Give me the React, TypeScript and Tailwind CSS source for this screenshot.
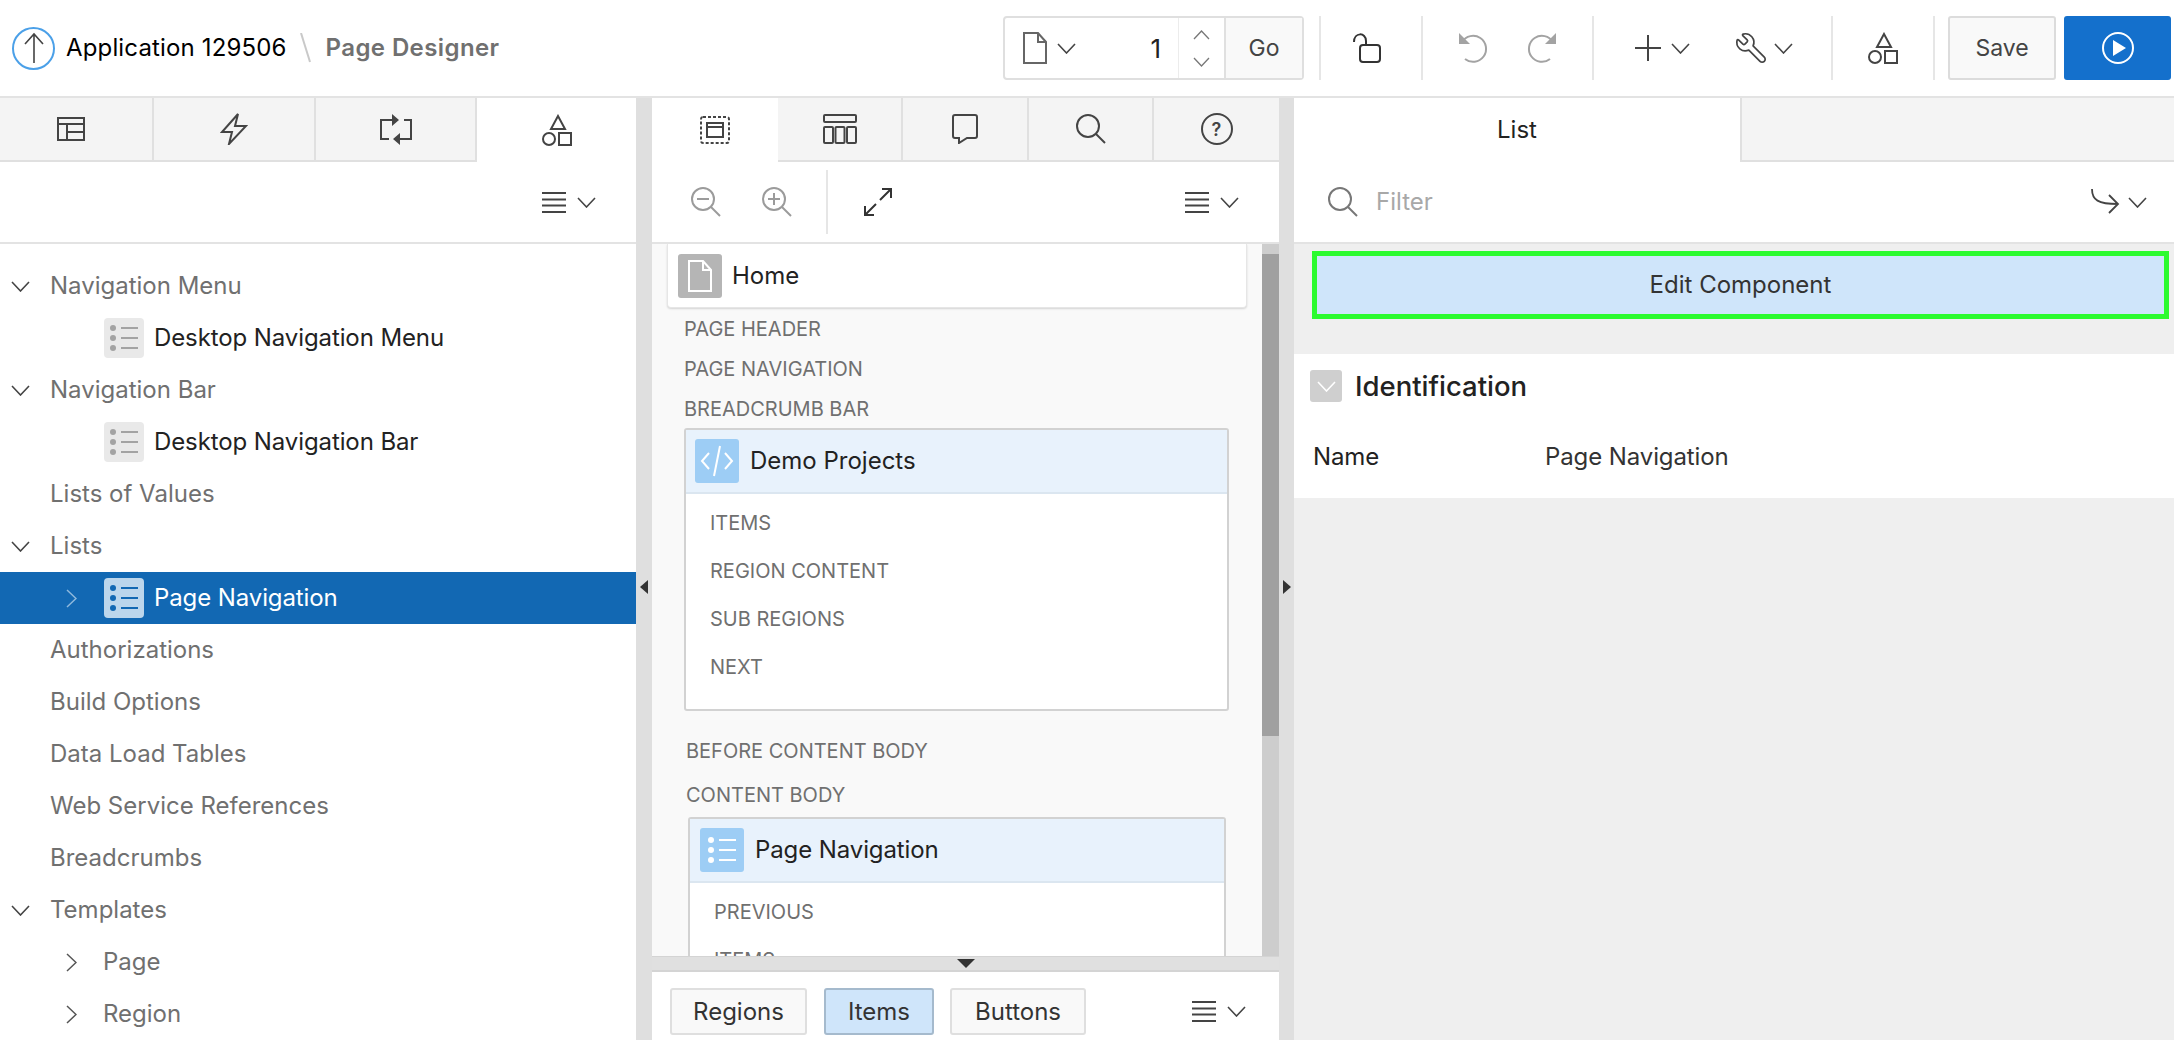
import React from "react";
import { Wrench } from "lucide-react";

type P = { className?: string };
const S = ({ w, h, children, className = "", color = "#444", sw = 2 }: { w: number; h: number; children: React.ReactNode; className?: string; color?: string; sw?: number }) => (
  <svg width={w} height={h} viewBox={`0 0 ${w} ${h}`} fill="none" stroke={color} strokeWidth={sw} className={`shrink-0 ${className}`}>{children}</svg>
);
const ChevD = ({ className = "", color = "#444", w = 19 }: P & { color?: string; w?: number }) => (
  <S w={w} h={11} color={color} sw={1.6} className={className}><path d={`M1 1 L${w / 2} 10 L${w - 1} 1`} /></S>
);
const ChevU = ({ className = "", color = "#777" }: P & { color?: string }) => (
  <S w={17} h={10} color={color} sw={1.3} className={className}><path d="M1 9 L8.5 1 L16 9" /></S>
);
const ChevR = ({ className = "", color = "#555" }: P & { color?: string }) => (
  <S w={11} h={19} color={color} sw={1.5} className={className}><path d="M1 1 L10 9.5 L1 18" /></S>
);
const Burger = () => (
  <S w={24} h={21} color="#444" sw={2}><path d="M0 1H24M0 7.5H24M0 13.5H24M0 20H24" /></S>
);
const Menu = ({ className = "" }: P) => (
  <div className={`flex items-center gap-[11px] ${className}`}><Burger /><ChevD /></div>
);
const Shapes = () => (
  <S w={30} h={32} color="#444" sw={2}>
    <path d="M16 2 L9 15 H23 Z" /><circle cx="7" cy="25" r="6" /><rect x="17" y="19" width="12" height="12" />
  </S>
);
const Search = ({ color = "#444", w = 30, h = 30, inner }: { color?: string; w?: number; h?: number; inner?: React.ReactNode }) => (
  <S w={w} h={h} color={color} sw={2}>
    <circle cx="12" cy="12" r="11" /><path d="M20 20 L29 29" />{inner}
  </S>
);
const ListGlyph = ({ color }: { color: string }) => (
  <svg width="30" height="28" viewBox="0 0 30 28" className="shrink-0">
    <circle cx="4" cy="4" r="3" fill={color} /><circle cx="4" cy="14" r="3" fill={color} /><circle cx="4" cy="24" r="3" fill={color} />
    <path d="M12 4H29M12 14H29M12 24H29" stroke={color} strokeWidth="2" />
  </svg>
);
const Badge = ({ bg, color }: { bg: string; color: string }) => (
  <div className={`w-[40px] h-[40px] rounded-[4px] flex items-center justify-center shrink-0 ${bg}`}><ListGlyph color={color} /></div>
);

const Tab = ({ w, active, last, children }: { w: string; active?: boolean; last?: boolean; children?: React.ReactNode }) => (
  <div className={`${w} h-full flex items-center justify-center ${active ? "bg-white" : `bg-[#f4f4f4] border-b-2 border-[#e0e0e0] ${last ? "" : "border-r-2"}`}`}>{children}</div>
);

const Sep = () => <div className="w-[2px] h-[64px] bg-[#e6e6e6] shrink-0" />;

const TreeRow = ({ children, selected }: { children: React.ReactNode; selected?: boolean }) => (
  <div className={`h-[52px] flex items-center ${selected ? "bg-[#1268b3] text-white" : ""}`}>{children}</div>
);
const Top = ({ label, open }: { label: string; open?: boolean }) => (
  <TreeRow>
    <div className="w-[50px] pl-[11px] shrink-0">{open && <ChevD />}</div>
    <span className="text-[#707070]">{label}</span>
  </TreeRow>
);
const Child = ({ label }: { label: string }) => (
  <TreeRow>
    <div className="w-[104px] shrink-0" />
    <Badge bg="bg-[#e9e9e9]" color="#a3a3a3" />
    <span className="ml-[10px] text-[#222] tracking-[-0.1px]">{label}</span>
  </TreeRow>
);
const Sub = ({ label }: { label: string }) => (
  <TreeRow>
    <div className="w-[103px] pl-[66px] shrink-0"><ChevR /></div>
    <span className="text-[#707070]">{label}</span>
  </TreeRow>
);
const Label = ({ children, h = "h-[40px]", className = "" }: { children: React.ReactNode; h?: string; className?: string }) => (
  <div className={`${h} flex items-center text-[20px] text-[#707070] uppercase ${className}`}>{children}</div>
);
const PBtn = ({ children, w, active }: { children: string; w: string; active?: boolean }) => (
  <div className={`${w} h-[47px] rounded-[3px] border-2 flex items-center justify-center text-[#333] ${active ? "bg-[#cfe5fa] border-[#a5bacd]" : "bg-[#f9f9f9] border-[#dfdfdf]"}`}>{children}</div>
);

export default function App() {
  return (
    <div className="w-[2174px] h-[1040px] overflow-hidden bg-white flex flex-col text-[24px] font-['Inter','Liberation_Sans',sans-serif] text-[#222]">
      {/* header */}
      <header className="h-[98px] shrink-0 border-b-2 border-[#e3e3e3] flex items-center">
        <div className="ml-[12px] w-[43px] h-[43px] rounded-full border-2 border-[#4ba0e8] flex items-center justify-center shrink-0">
          <S w={20} h={32} color="#444" sw={1.6}><path d="M10 31V2M1 12 L10 2 L19 12" /></S>
        </div>
        <span className="ml-[11px] text-black tracking-[0.15px]">Application 129506</span>
        <S w={12} h={30} color="#c9c9c9" sw={2} className="ml-[13px]"><path d="M1 0 L10 29" /></S>
        <span className="ml-[14px] font-semibold text-[#707070] tracking-[0.4px]">Page Designer</span>
        <div className="flex-1" />
        <div className="w-[301px] h-[64px] rounded-[4px] border-2 border-[#dfdfdf] flex items-stretch shrink-0">
          <div className="flex-1 flex items-center pl-[18px]">
            <S w={24} h={32} color="#666" sw={2}><path d="M1 1H15L23 10V31H1Z M15 1V10H23" /></S>
            <ChevD className="ml-[10px]" />
            <span className="ml-auto mr-[17px] text-[26px] text-[#222]">1</span>
          </div>
          <div className="w-[48px] border-l border-[#ececec] border-r-2 border-r-[#e0e0e0] flex flex-col items-center justify-center gap-[17px]">
            <ChevU /><ChevU className="rotate-180" />
          </div>
          <div className="w-[76px] bg-[#f9f9f9] flex items-center justify-center text-[#444] text-[23px]">Go</div>
        </div>
        <div className="w-[15px] shrink-0" />
        <Sep />
        <div className="w-[100px] flex justify-center pr-[8px] shrink-0">
          <S w={28} h={30} color="#333" sw={2}>
            <rect x="7" y="12" width="20" height="17" rx="3" /><path d="M1 9 C1 -1 13 -1 13 8 V12" />
          </S>
        </div>
        <Sep />
        <div className="w-[169px] flex justify-center gap-[39px] pr-[1px] shrink-0">
          <S w={30} h={32} color="#a3a3a3" sw={2}>
            <path d="M4 10 A13 13 0 1 1 7 27 A13 13 0 0 0 7 27" /><path d="M1 1 L1 12 L12 12 Z" fill="#a3a3a3" stroke="none" />
          </S>
          <S w={30} h={32} color="#a3a3a3" sw={2} className="-scale-x-100">
            <path d="M4 10 A13 13 0 1 1 7 27 A13 13 0 0 0 7 27" /><path d="M1 1 L1 12 L12 12 Z" fill="#a3a3a3" stroke="none" />
          </S>
        </div>
        <Sep />
        <div className="w-[237px] flex items-center shrink-0">
          <S w={26} h={26} color="#444" sw={2} className="ml-[41px]"><path d="M13 0V26M0 13H26" /></S>
          <ChevD className="ml-[10px]" />
          <Wrench size={34} strokeWidth={1.2} color="#444" className="ml-[44px] -scale-x-100 shrink-0" />
          <ChevD className="ml-[6px]" />
        </div>
        <Sep />
        <div className="w-[100px] flex justify-center shrink-0"><Shapes /></div>
        <Sep />
        <div className="ml-[13px] w-[108px] h-[64px] rounded-[3px] border-2 border-[#dcdcdc] bg-[#f9f9f9] flex items-center justify-center text-[#444] text-[23px] shrink-0">Save</div>
        <div className="ml-[8px] w-[107px] h-[64px] rounded-[3px] bg-[#1470cc] flex items-center justify-center shrink-0">
          <svg width="32" height="32" viewBox="0 0 32 32" fill="none"><circle cx="16" cy="16" r="15" stroke="#fff" strokeWidth="2" /><path d="M11 8 L24 16 L11 24 Z" fill="#fff" /></svg>
        </div>
        <div className="w-[3px] shrink-0" />
      </header>

      <main className="flex-1 flex min-h-0">
        {/* left */}
        <section className="w-[636px] shrink-0 flex flex-col">
          <div className="h-[64px] flex shrink-0">
            <Tab w="w-[154px] pr-[11px]">
              <S w={28} h={24} color="#444" sw={2}><rect x="1" y="1" width="26" height="22" /><path d="M1 7H27M10 7V23M10 15H27" /></S>
            </Tab>
            <Tab w="w-[162px]">
              <S w={28} h={32} color="#444" sw={2}><path d="M18 1 L2 19 H12 L9 31 L26 13 H15 Z" /></S>
            </Tab>
            <Tab w="w-[161px]">
              <S w={34} h={32} color="#444" sw={2}>
                <path d="M13 7H2V26H10M21 26H32V7H25" /><path d="M13 1 L20 7 L13 13 Z M21 20 L14 26 L21 32 Z" fill="#444" stroke="none" />
              </S>
            </Tab>
            <Tab w="flex-1" active><Shapes /></Tab>
          </div>
          <div className="h-[82px] shrink-0 border-b-2 border-[#e3e3e3] flex items-center justify-end pr-[40px]"><Menu /></div>
          <div className="pt-[16px] flex-1 overflow-hidden">
            <Top label="Navigation Menu" open />
            <Child label="Desktop Navigation Menu" />
            <Top label="Navigation Bar" open />
            <Child label="Desktop Navigation Bar" />
            <Top label="Lists of Values" />
            <Top label="Lists" open />
            <TreeRow selected>
              <div className="w-[104px] pl-[66px] shrink-0"><ChevR color="#8fb9dd" /></div>
              <Badge bg="bg-[#bcd6ec]" color="#1268b3" />
              <span className="ml-[10px] tracking-[-0.1px]">Page Navigation</span>
            </TreeRow>
            <Top label="Authorizations" />
            <Top label="Build Options" />
            <Top label="Data Load Tables" />
            <Top label="Web Service References" />
            <Top label="Breadcrumbs" />
            <Top label="Templates" open />
            <Sub label="Page" />
            <Sub label="Region" />
          </div>
        </section>

        {/* splitter */}
        <div className="w-[16px] shrink-0 bg-[#dfdfdf] flex items-center justify-center pt-[36px]">
          <svg width="8" height="14" viewBox="0 0 8 14"><path d="M8 0V14L0 7Z" fill="#333" /></svg>
        </div>

        {/* center */}
        <section className="w-[627px] shrink-0 flex flex-col">
          <div className="h-[64px] flex shrink-0">
            <Tab w="w-[126px]" active>
              <S w={30} h={28} color="#444" sw={2}>
                <rect x="1" y="1" width="28" height="26" rx="2" strokeDasharray="3 2" /><rect x="7" y="7" width="16" height="14" /><path d="M7 11H23" />
              </S>
            </Tab>
            <Tab w="w-[125px]">
              <S w={34} h={30} color="#444" sw={2}>
                <rect x="1" y="1" width="32" height="7" rx="1" /><rect x="1" y="13" width="9" height="16" rx="1" /><rect x="12.5" y="13" width="9" height="16" rx="1" /><rect x="24" y="13" width="9" height="16" rx="1" />
              </S>
            </Tab>
            <Tab w="w-[126px]">
              <S w={26} h={30} color="#444" sw={2}><path d="M3 1H23Q25 1 25 3V22Q25 24 23 24H15L7 29V24H3Q1 24 1 22V3Q1 1 3 1Z" /></S>
            </Tab>
            <Tab w="w-[125px]"><Search /></Tab>
            <Tab w="flex-1" last>
              <div className="w-[32px] h-[32px] rounded-full border-2 border-[#444] flex items-center justify-center text-[18px] font-semibold text-[#444]">?</div>
            </Tab>
          </div>
          <div className="h-[82px] shrink-0 border-b-2 border-[#e3e3e3] flex items-center">
            <div className="ml-[39px]"><Search color="#9b9b9b" inner={<path d="M6 12H18" />} /></div>
            <div className="ml-[41px]"><Search color="#9b9b9b" inner={<path d="M6 12H18M12 6V18" />} /></div>
            <div className="ml-[34px] w-[2px] h-[64px] bg-[#e6e6e6]" />
            <S w={28} h={28} color="#333" sw={2} className="ml-[36px]">
              <path d="M16 12 L27 1 M18 1H27V10 M12 16 L1 27 M1 18V27H10" />
            </S>
            <Menu className="ml-auto mr-[40px]" />
          </div>
          <div className="flex-1 min-h-0 flex">
            <div className="w-[610px] shrink-0 bg-[#f9f9f9] overflow-hidden">
              <div className="ml-[15px] w-[580px] h-[64px] bg-white rounded-b-[4px] border border-[#e6e6e6] border-t-0 shadow-[0_1px_2px_rgba(0,0,0,0.15)] flex items-center pl-[10px]">
                <div className="w-[44px] h-[44px] rounded-[3px] bg-[#b5b5b5] flex items-center justify-center">
                  <S w={24} h={32} color="#fff" sw={2}><path d="M1 1H15L23 10V31H1Z M15 1V10H23" /></S>
                </div>
                <span className="ml-[10px] text-[#222]">Home</span>
              </div>
              <Label className="pl-[32px] pt-[2px]">Page Header</Label>
              <Label className="pl-[32px] pt-[2px]">Page Navigation</Label>
              <Label className="pl-[32px] pt-[2px]">Breadcrumb Bar</Label>
              <div className="ml-[32px] w-[545px] h-[283px] bg-white rounded-[3px] border-2 border-[#d2d2d2]">
                <div className="h-[64px] bg-[#e8f2fc] border-b-2 border-[#dbe6f0] flex items-center pl-[9px]">
                  <div className="w-[44px] h-[44px] rounded-[3px] bg-[#9dcdf5] flex items-center justify-center">
                    <S w={34} h={34} color="#fff" sw={2}><path d="M9 9 L2 17 L9 25 M25 9 L32 17 L25 25 M20 2 L14 32" /></S>
                  </div>
                  <span className="ml-[11px] text-[#222]">Demo Projects</span>
                </div>
                <div className="pt-[5px] pl-[24px]">
                  <Label h="h-[48px]">Items</Label>
                  <Label h="h-[48px]">Region Content</Label>
                  <Label h="h-[48px]">Sub Regions</Label>
                  <Label h="h-[48px]">Next</Label>
                </div>
              </div>
              <Label className="pl-[34px] mt-[20px]">Before Content Body</Label>
              <Label h="h-[44px]" className="pl-[34px] mt-[2px]">Content Body</Label>
              <div className="ml-[36px] w-[538px] h-[200px] bg-white rounded-[3px] border-2 border-[#d2d2d2]">
                <div className="h-[64px] bg-[#e8f2fc] border-b-2 border-[#dbe6f0] flex items-center pl-[10px]">
                  <div className="w-[44px] h-[44px] rounded-[3px] bg-[#9dcdf5] flex items-center justify-center"><ListGlyph color="#fff" /></div>
                  <span className="ml-[11px] text-[#222] tracking-[-0.1px]">Page Navigation</span>
                </div>
                <div className="pt-[5px] pl-[24px]">
                  <Label h="h-[48px]">Previous</Label>
                  <Label h="h-[48px]">Items</Label>
                </div>
              </div>
            </div>
            <div className="w-[17px] shrink-0 bg-[#cdcdcd] pt-[10px]"><div className="h-[482px] bg-[#a0a0a0]" /></div>
          </div>
          <div className="h-[16px] shrink-0 bg-[#e0e0e0] border-t border-[#d4d4d4] border-b-2 border-b-[#d4d4d4] flex items-center justify-center">
            <svg width="18" height="9" viewBox="0 0 18 9"><path d="M0 0H18L9 9Z" fill="#333" /></svg>
          </div>
          <div className="h-[68px] shrink-0 flex items-center pl-[18px] pt-[11px]">
            <PBtn w="w-[137px]">Regions</PBtn>
            <PBtn w="w-[110px] ml-[17px]" active>Items</PBtn>
            <PBtn w="w-[136px] ml-[16px]">Buttons</PBtn>
            <Menu className="ml-auto mr-[33px]" />
          </div>
        </section>

        {/* splitter */}
        <div className="w-[15px] shrink-0 bg-[#dfdfdf] flex items-center justify-center pt-[36px]">
          <svg width="8" height="14" viewBox="0 0 8 14"><path d="M0 0V14L8 7Z" fill="#333" /></svg>
        </div>

        {/* right */}
        <section className="flex-1 min-w-0 flex flex-col">
          <div className="h-[64px] flex shrink-0">
            <div className="w-[448px] flex items-center justify-center border-r-2 border-[#e0e0e0] text-[#222]">List</div>
            <Tab w="flex-1" last />
          </div>
          <div className="h-[82px] shrink-0 border-b-2 border-[#e3e3e3] flex items-center pl-[34px]">
            <Search color="#777" />
            <span className="ml-[18px] text-[#a8a8a8]">Filter</span>
            <S w={30} h={28} color="#444" sw={1.8} className="ml-auto">
              <path d="M2 1 C2 12 8 16 28 16 M19 7 L28 16 L19 25" />
            </S>
            <ChevD className="ml-[8px] mr-[27px]" />
          </div>
          <div className="flex-1 bg-[#efefef] pt-[7px]">
            <div className="ml-[18px] w-[857px] h-[68px] border-[5px] border-[#2bfb2f] bg-[#cfe5fa] flex items-center justify-center text-[#333]">Edit Component</div>
            <div className="mt-[35px] h-[144px] bg-white">
              <div className="h-[64px] pt-[16px] flex items-start pl-[16px]">
                <div className="w-[32px] h-[32px] rounded-[3px] bg-[#cfcfcf] flex items-center justify-center"><ChevD color="#fff" /></div>
                <span className="ml-[13px] text-[27.5px] leading-[32px] font-medium text-[#222]">Identification</span>
              </div>
              <div className="h-[78px] flex items-center pl-[19px] tracking-[-0.1px]">
                <span className="w-[232px] text-[#222]">Name</span>
                <span className="text-[#333]">Page Navigation</span>
              </div>
            </div>
          </div>
        </section>
      </main>
    </div>
  );
}
